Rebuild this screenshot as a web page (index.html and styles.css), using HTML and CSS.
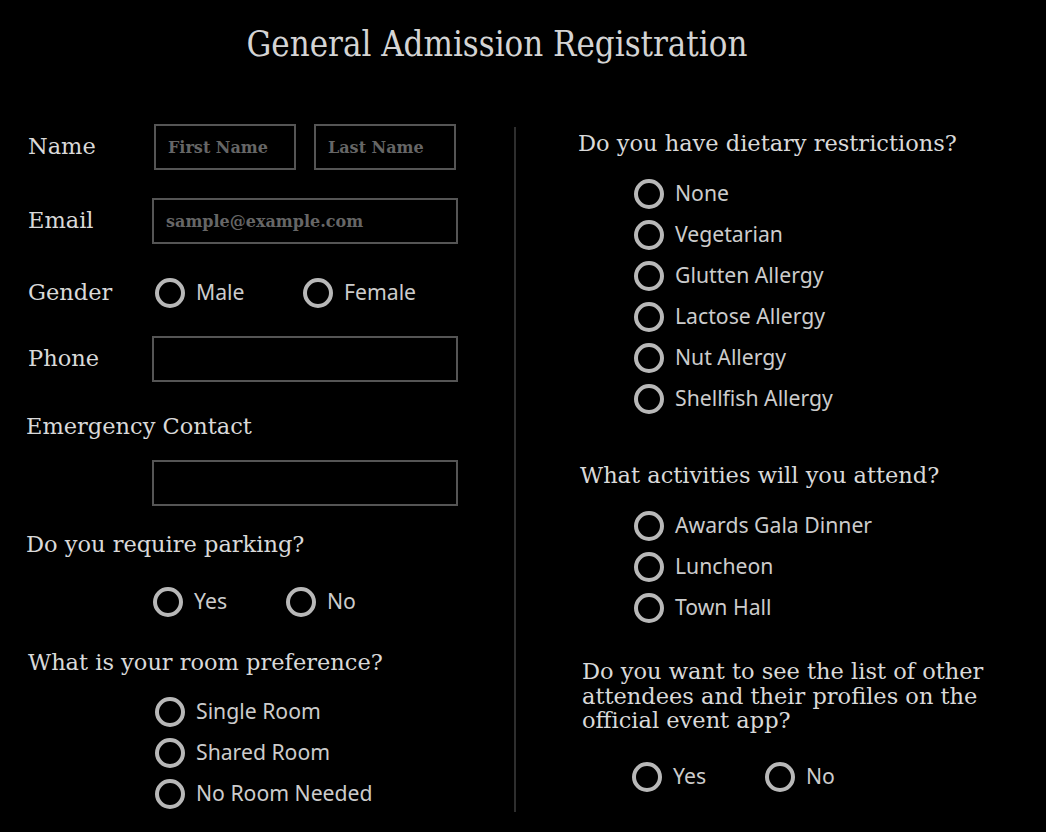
FILE: index.html
```html
<!DOCTYPE html>
<html lang="en">
<head>
<meta charset="utf-8">
<title>General Admission Registration</title>
<link rel="stylesheet" href="styles.css">
</head>
<body>
<header class="header">
  <h1 class="title">General Admission Registration</h1>
</header>
<main class="form">
  <section class="col col-left">
    <div class="row row-name">
      <label class="label">Name</label>
      <input class="field field-half" type="text" placeholder="First Name">
      <input class="field field-half field-last" type="text" placeholder="Last Name">
    </div>
    <div class="row row-email">
      <label class="label">Email</label>
      <input class="field field-wide" type="email" placeholder="sample@example.com">
    </div>
    <div class="row row-gender">
      <label class="label">Gender</label>
      <div class="inline-options">
        <label class="option"><input class="radio" type="radio" name="gender"><span>Male</span></label>
        <label class="option option-second"><input class="radio" type="radio" name="gender"><span>Female</span></label>
      </div>
    </div>
    <div class="row row-phone">
      <label class="label">Phone</label>
      <input class="field field-wide" type="tel">
    </div>
    <p class="question q-emergency">Emergency Contact</p>
    <div class="row row-emergency">
      <input class="field field-wide" type="text">
    </div>
    <p class="question q-parking">Do you require parking?</p>
    <div class="inline-options opts-parking">
      <label class="option"><input class="radio" type="radio" name="parking"><span>Yes</span></label>
      <label class="option option-second-short"><input class="radio" type="radio" name="parking"><span>No</span></label>
    </div>
    <p class="question q-room">What is your room preference?</p>
    <div class="option-list opts-room">
      <label class="option"><input class="radio" type="radio" name="room"><span>Single Room</span></label>
      <label class="option"><input class="radio" type="radio" name="room"><span>Shared Room</span></label>
      <label class="option"><input class="radio" type="radio" name="room"><span>No Room Needed</span></label>
    </div>
  </section>
  <div class="divider"></div>
  <section class="col col-right">
    <p class="question q-diet">Do you have dietary restrictions?</p>
    <div class="option-list opts-diet">
      <label class="option"><input class="radio" type="radio" name="diet"><span>None</span></label>
      <label class="option"><input class="radio" type="radio" name="diet"><span>Vegetarian</span></label>
      <label class="option"><input class="radio" type="radio" name="diet"><span>Glutten Allergy</span></label>
      <label class="option"><input class="radio" type="radio" name="diet"><span>Lactose Allergy</span></label>
      <label class="option"><input class="radio" type="radio" name="diet"><span>Nut Allergy</span></label>
      <label class="option"><input class="radio" type="radio" name="diet"><span>Shellfish Allergy</span></label>
    </div>
    <p class="question q-activities">What activities will you attend?</p>
    <div class="option-list opts-activities">
      <label class="option"><input class="radio" type="radio" name="act"><span>Awards Gala Dinner</span></label>
      <label class="option"><input class="radio" type="radio" name="act"><span>Luncheon</span></label>
      <label class="option"><input class="radio" type="radio" name="act"><span>Town Hall</span></label>
    </div>
    <p class="question q-app">Do you want to see the list of other attendees and their profiles on the official event app?</p>
    <div class="inline-options opts-app">
      <label class="option"><input class="radio" type="radio" name="app"><span>Yes</span></label>
      <label class="option option-second-short"><input class="radio" type="radio" name="app"><span>No</span></label>
    </div>
  </section>
</main>
</body>
</html>
```
FILE: styles.css
```css
* { box-sizing: border-box; }
html, body { margin: 0; padding: 0; background: #000; }
body {
  width: 1046px;
  height: 832px;
  overflow: hidden;
  color: #d9d9d9;
  font-family: "DejaVu Serif", "Liberation Serif", serif;
}
.header {
  height: 124px;
  padding-top: 25px;
  padding-right: 52px;
  text-align: center;
}
.title {
  margin: 0;
  font-size: 34.5px;
  font-weight: normal;
  font-stretch: condensed;
  line-height: 38px;
  color: #d4d4d4;
}
.form {
  display: flex;
  align-items: flex-start;
}
.col-left { width: 514px; }
.divider {
  width: 2px;
  height: 685px;
  margin-top: 3px;
  background: #2e2e2e;
}
.col-right { flex: 1; padding-left: 62px; }

.row { display: flex; align-items: center; height: 46px; }
.label {
  width: 154px;
  padding-left: 28px;
  flex: none;
  font-size: 22.5px;
  line-height: 30px;
  margin-top: -2px;
  color: #d9d9d9;
}
.row-email .label, .row-phone .label { width: 152px; }
.row-email { margin-top: 28px; }
.row-gender { margin-top: 34px; height: 30px; }
.row-gender .label { width: 155px; }
.row-phone { margin-top: 28px; }
.row-emergency { margin-top: 19px; padding-left: 152px; }

.field {
  height: 46px;
  margin: 0;
  background: #000;
  border: 2px solid #555;
  border-radius: 0;
  padding: 0 12px;
  font-family: "DejaVu Serif", serif;
  font-weight: bold;
  font-size: 16px;
  color: #ccc;
  outline: none;
}
.field::placeholder { color: #666; }
.field-half { width: 142px; }
.field-last { margin-left: 18px; }
.field-wide { width: 306px; }

.question {
  margin: 0;
  font-size: 22.5px;
  line-height: 30px;
  color: #d9d9d9;
}
.q-emergency { margin-top: 29px; padding-left: 26px; }
.q-parking { margin-top: 23px; padding-left: 26px; }
.q-room { margin-top: 30px; padding-left: 28px; }

.inline-options { display: flex; align-items: center; height: 30px; }
.option {
  display: flex;
  align-items: center;
  height: 30px;
  font-family: "Noto Sans", "Open Sans", sans-serif;
  font-size: 21.2px;
  color: #cccccc;
}
.option span { margin-left: 11px; margin-top: -3px; }
.radio {
  appearance: none;
  -webkit-appearance: none;
  width: 30px;
  height: 30px;
  margin: 0;
  flex: none;
  border: 4px solid #b8b8b8;
  border-radius: 50%;
  background: #000;
}
.row-gender .option { width: 148px; }
.opts-parking { margin-top: 28px; padding-left: 153px; }
.opts-parking .option:first-child, .opts-app .option:first-child { width: 133px; }

.option-list { display: flex; flex-direction: column; gap: 11px; }
.opts-room { margin-top: 20px; padding-left: 155px; }

.q-diet { margin-top: 4px; }
.opts-diet { margin-top: 21px; padding-left: 56px; }
.q-activities { margin-top: 46px; padding-left: 2px; }
.opts-activities { margin-top: 21px; padding-left: 56px; }
.q-app {
  margin-top: 36px;
  padding-left: 4px;
  width: 420px;
  line-height: 24.5px;
}
.opts-app { margin-top: 29px; padding-left: 54px; }
```
